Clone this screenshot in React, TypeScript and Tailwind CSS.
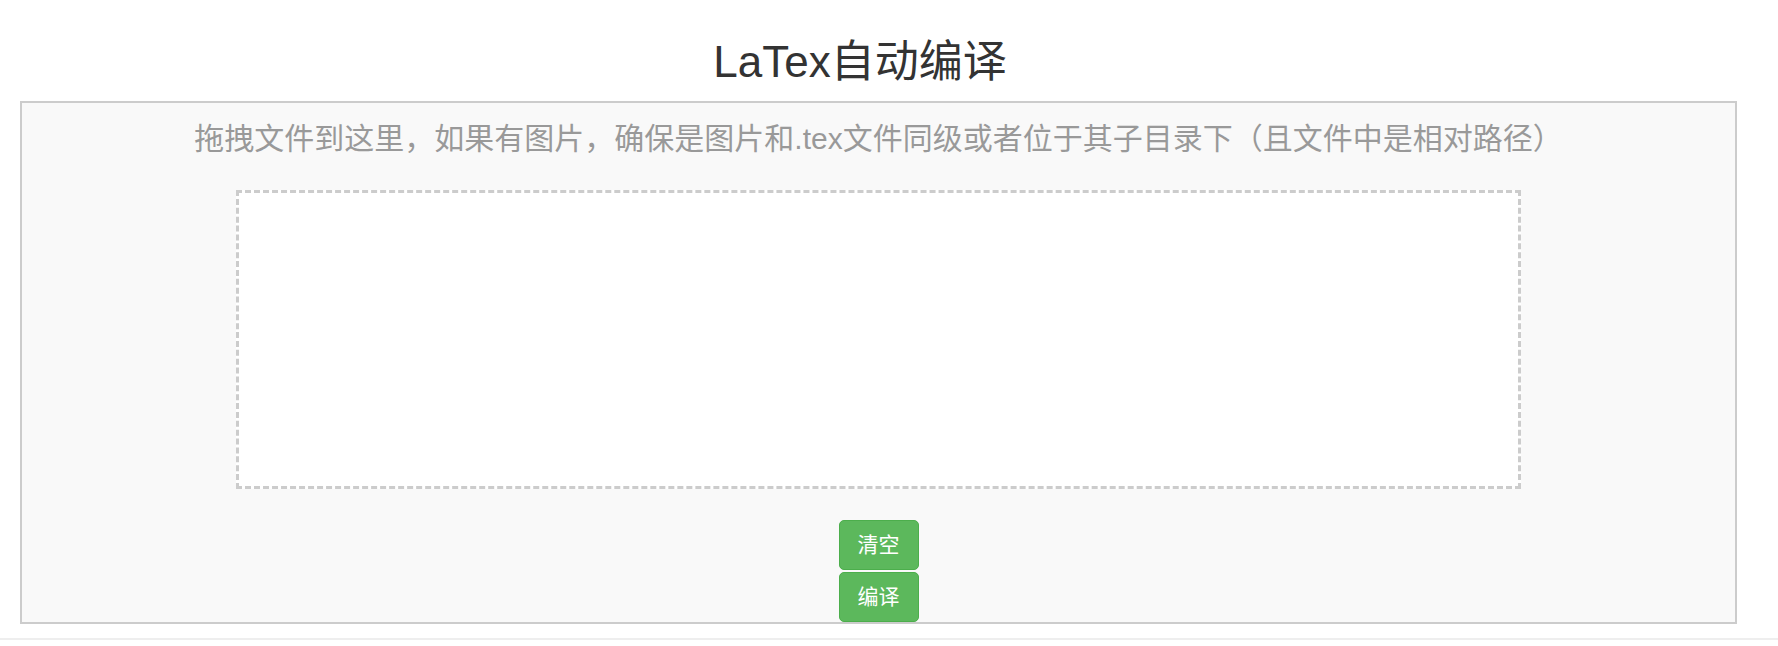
export default function App() {
  const font = { fontFamily: '"Liberation Sans", "Noto Sans CJK SC", sans-serif' };

  return (
    <div className="min-h-[646px] bg-white" style={font}>
      {/* Title */}
      <h1 className="pt-[38px] mb-[15px] w-[1720px] text-center text-[44px] leading-[48px] text-[#333]">
        LaTex自动编译
      </h1>

      {/* Drop area */}
      <div className="ml-[20px] w-[1717px] border-2 border-[#ccc] bg-[#f9f9f9]">
        <p className="mt-[19px] text-center text-[30px] leading-[33px] text-[#999]">
          拖拽文件到这里，如果有图片，确保是图片和.tex文件同级或者位于其子目录下（且文件中是相对路径）
        </p>
        <div className="mt-[35px] mx-auto w-3/4 h-[299px] border-[3px] border-dashed border-[#ccc] bg-white" />
        <div className="mt-[31px] flex flex-col items-center gap-[2px]">
          <button className="w-[80px] h-[50px] rounded-[5px] bg-[#5cb85c] border border-[#4cae4c] text-white text-[21px]">
            清空
          </button>
          <button className="w-[80px] h-[50px] rounded-[5px] bg-[#5cb85c] border border-[#4cae4c] text-white text-[21px]">
            编译
          </button>
        </div>
      </div>

      <div className="mt-[14px] border-t-2 border-[#eee]" />
    </div>
  );
}
